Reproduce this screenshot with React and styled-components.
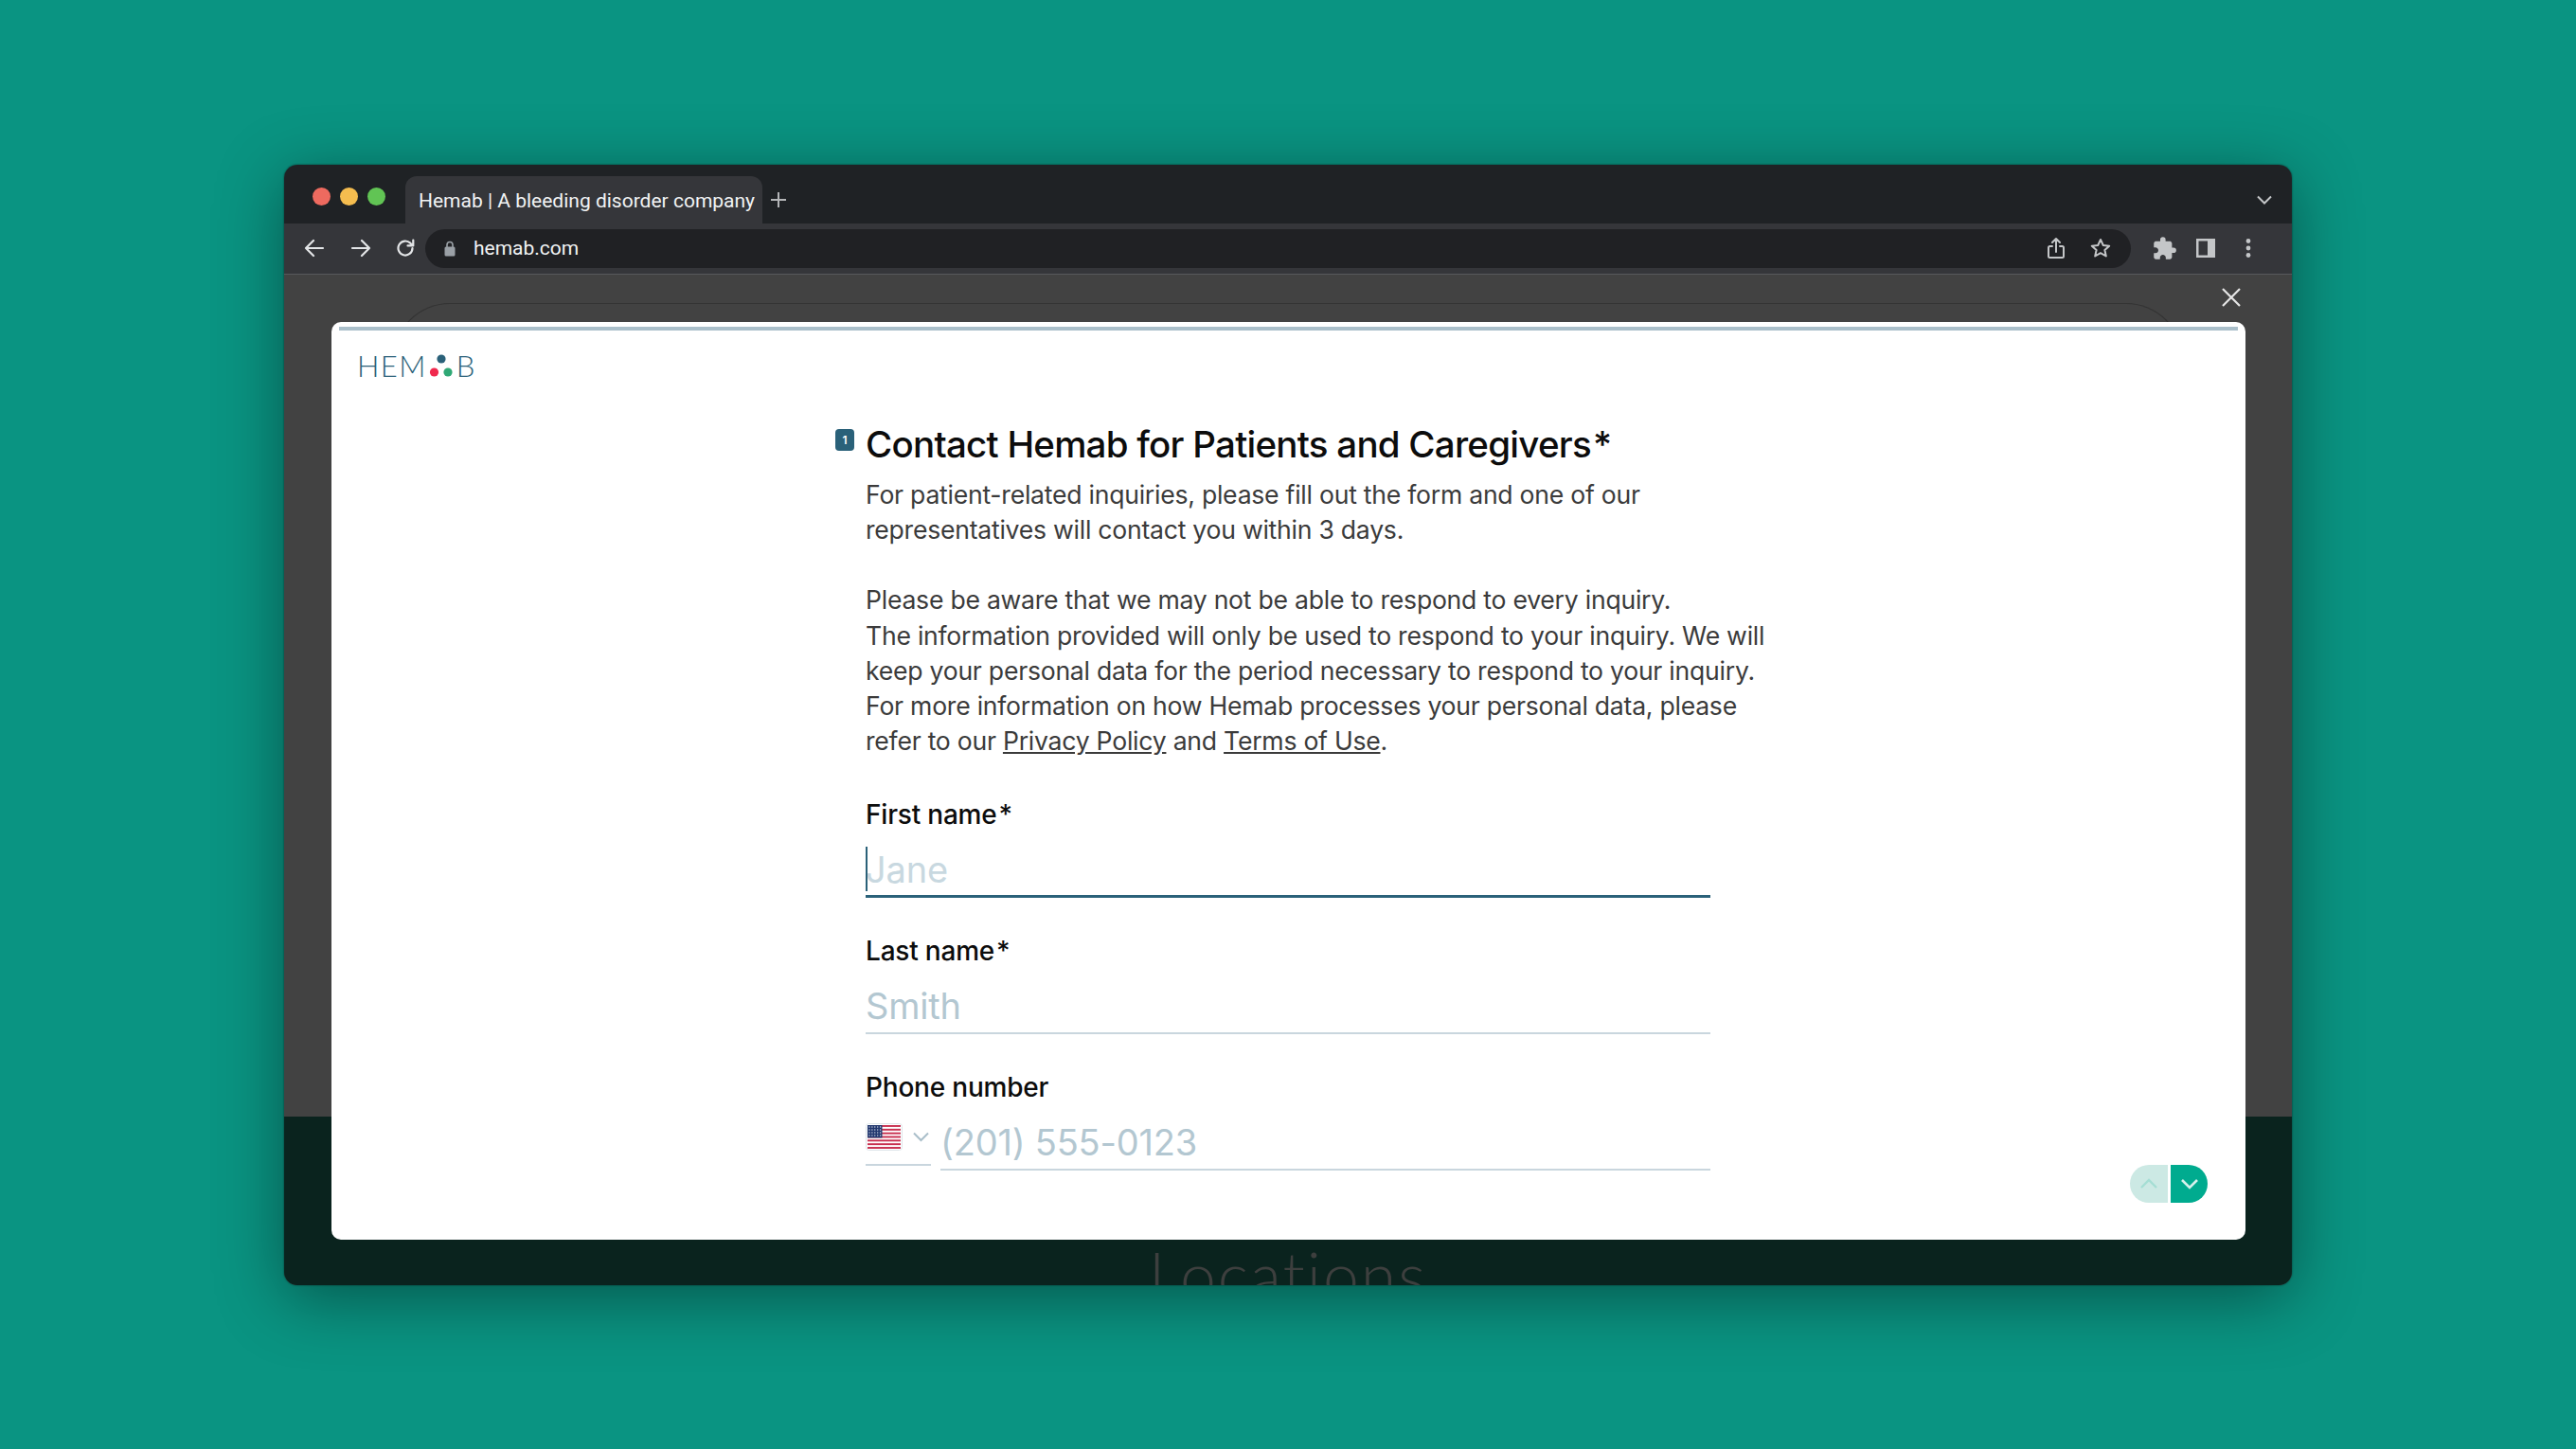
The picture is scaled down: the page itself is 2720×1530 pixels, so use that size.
import React from "react";
import styled, { createGlobalStyle } from "styled-components";
import { MdExtension } from "react-icons/md";

const GlobalStyle = createGlobalStyle`
  html, body {
    margin: 0;
    padding: 0;
    background: #0a9482;
  }
  * {
    box-sizing: border-box;
  }
`;

const Page = styled.div`
  width: 2720px;
  height: 1530px;
  padding: 174px 300px 173px;
  background: #0a9482;
  overflow: hidden;
`;

const Window = styled.div`
  width: 2120px;
  height: 1183px;
  display: flex;
  flex-direction: column;
  border-radius: 14px;
  overflow: hidden;
  box-shadow: 0 14px 70px rgba(0, 0, 0, 0.42), 0 0 2px rgba(0, 0, 0, 0.6);
`;

const TabStrip = styled.div`
  height: 62px;
  flex: none;
  display: flex;
  align-items: flex-end;
  padding-left: 30px;
  padding-right: 20px;
  background: #1f2225;
`;

const Lights = styled.div`
  display: flex;
  gap: 10px;
  align-self: flex-start;
  margin-top: 24px;
  margin-right: 21px;
`;

const Light = styled.span`
  width: 19px;
  height: 19px;
  border-radius: 50%;
  background: ${p => p.$color};
`;

const Tab = styled.div`
  width: 377px;
  height: 50px;
  display: flex;
  align-items: center;
  padding: 2px 0 0 14px;
  border-radius: 12px 12px 0 0;
  background: #35363a;
  color: #f1f3f4;
  font: 400 21px "Roboto", sans-serif;
  white-space: nowrap;
`;

const NewTab = styled.svg`
  width: 20px;
  height: 20px;
  margin: 0 0 15px 7px;
`;

const TabMenu = styled.svg`
  width: 18px;
  height: 12px;
  margin: 0 0 19px auto;
`;

const Toolbar = styled.div`
  height: 54px;
  flex: none;
  display: flex;
  align-items: center;
  padding: 0 20px 1px 20px;
  background: #35363a;
  border-bottom: 1px solid #58595c;
`;

const NavIcon = styled.svg`
  width: 24px;
  height: 24px;
  flex: none;
  margin-right: ${p => p.$gap || 23}px;
`;

const UrlBar = styled.div`
  width: 1801px;
  height: 41px;
  margin-left: -2px;
  display: flex;
  align-items: center;
  padding: 0 20px 0 20px;
  border-radius: 21px;
  background: #202124;
  color: #f1f3f4;
  font: 400 21px "Roboto", sans-serif;
`;

const UrlText = styled.span`
  margin-left: 19px;
  margin-right: auto;
`;

const BarIcon = styled.svg`
  width: 24px;
  height: 24px;
  flex: none;
  margin-left: ${p => p.$gap || 0}px;
`;

const Puzzle = styled(MdExtension)`
  width: 27px;
  height: 27px;
  flex: none;
  margin-left: 22px;
  color: #c4c6c8;
`;

const Viewport = styled.div`
  position: relative;
  flex: 1;
  display: flex;
  flex-direction: column;
  overflow: hidden;
  background: #424242;
`;

const Backdrop = styled.div`
  flex: 1;
  padding: 30px 115px 0;
`;

const BackdropCard = styled.div`
  height: 100%;
  border: 1px solid #333;
  border-bottom: 0;
  border-radius: 60px 60px 0 0;
`;

const DarkBand = styled.div`
  height: 178px;
  flex: none;
  display: flex;
  justify-content: center;
  padding-top: 133px;
  background: #0a231e;
  overflow: hidden;
`;

const BandTitle = styled.div`
  color: #3d3f3e;
  font: 300 68px/68px "Lato", sans-serif;
  letter-spacing: 2px;
`;

const CloseIcon = styled.svg`
  position: absolute;
  top: 13px;
  right: 53px;
  width: 22px;
  height: 22px;
`;

const Modal = styled.div`
  position: absolute;
  top: 50px;
  left: 50px;
  width: 2021px;
  height: 969px;
  padding: 5px 8px 0;
  overflow: hidden;
  border-radius: 10px;
  background: #fff;
`;

const Progress = styled.div`
  height: 4px;
  background: #aabfca;
`;

const LogoRow = styled.div`
  display: flex;
  align-items: center;
  height: 30px;
  margin: 22px 0 0 19px;
  color: #2a6179;
  font: 300 31px/30px "Lato", sans-serif;
  letter-spacing: 1.4px;
`;

const LogoDots = styled.svg`
  width: 30px;
  height: 30px;
  margin: 0 1px 0 0;
`;

const Form = styled.div`
  width: 892px;
  margin: 42px 0 0 556px;
`;

const Heading = styled.h1`
  position: relative;
  margin: 0;
  color: #0c0c0c;
  font: 500 38.5px/52px "Inter", sans-serif;
  letter-spacing: -0.75px;
  white-space: nowrap;
`;

const StepBadge = styled.span`
  position: absolute;
  top: 10px;
  left: -32px;
  width: 20px;
  height: 23px;
  display: flex;
  align-items: center;
  justify-content: center;
  border-radius: 4px;
  background: #2a6179;
  color: #fff;
  font: 600 12px "Inter", sans-serif;
  letter-spacing: 0;
`;

const Copy = styled.p`
  margin: ${p => p.$top || 0}px 0 0;
  color: #3b3b3b;
  font: 400 26.6px/37.2px "Inter", sans-serif;
  letter-spacing: -0.25px;
  white-space: nowrap;
`;

const TextLink = styled.a`
  color: inherit;
  text-decoration: underline;
`;

const Field = styled.div`
  margin-top: ${p => p.$top || 38}px;
`;

const Label = styled.div`
  color: #0c0c0c;
  font: 500 28px/36px "Inter", sans-serif;
  letter-spacing: -0.2px;
`;

const Required = styled.span`
  margin-left: 2px;
`;

const InputLine = styled.div`
  position: relative;
  height: 60px;
  margin-top: 10px;
  padding-top: 5px;
  border-bottom: ${p => (p.$focused ? "3px solid #2a6179" : "2px solid #c9d6de")};
  font: 400 38px/50px "Inter", sans-serif;
  letter-spacing: -0.2px;
  color: ${p => (p.$focused ? "#c8d8e0" : "#b3c7d1")};
`;

const Caret = styled.span`
  position: absolute;
  top: 6px;
  left: 0;
  width: 2px;
  height: 47px;
  background: #2a6179;
`;

const PhoneRow = styled.div`
  display: flex;
  gap: 10px;
  margin-top: 10px;
`;

const CountrySelect = styled.div`
  width: 69px;
  height: 55px;
  flex: none;
  display: flex;
  align-items: center;
  justify-content: space-between;
  padding-bottom: 5px;
  padding-right: 1px;
  border-bottom: 2px solid #c9d6de;
`;

const Flag = styled.svg`
  width: 39px;
  height: 29px;
`;

const SelectChevron = styled.svg`
  width: 19px;
  height: 12px;
`;

const PhoneInput = styled(InputLine)`
  flex: 1;
  margin-top: 0;
`;

const ScrollNav = styled.div`
  position: absolute;
  right: 40px;
  bottom: 39px;
  display: flex;
  gap: 3px;
`;

const ScrollButton = styled.div`
  width: ${p => (p.$dir === "up" ? 40 : 39)}px;
  height: 40px;
  display: flex;
  align-items: center;
  justify-content: center;
  border-radius: ${p => (p.$dir === "up" ? "20px 0 0 20px" : "0 20px 20px 0")};
  background: ${p => (p.$dir === "up" ? "#cce9e4" : "#00ab8f")};
`;

const ScrollChevron = styled.svg`
  width: 20px;
  height: 12px;
`;

const stroke = { fill: "none", stroke: "#e3e5e7", strokeWidth: 2.2, strokeLinecap: "round", strokeLinejoin: "round" };
const dim = { fill: "none", stroke: "#c4c6c8", strokeWidth: 2, strokeLinecap: "round", strokeLinejoin: "round" };

const stripes = [0, 2, 4, 6, 8, 10, 12];

function UsFlag() {
  return (
    <Flag viewBox="0 0 39 29">
      <rect x="0.5" y="0.5" width="38" height="28" rx="3" fill="#fff" stroke="#dfe6ea" />
      {stripes.map(i => (
        <rect key={i} x="2" y={2 + i * 1.92} width="35" height="1.92" fill="#c8304f" />
      ))}
      <rect x="2" y="2" width="15.5" height="13.4" fill="#22386f" />
      {[0, 1, 2, 3].map(r =>
        [0, 1, 2, 3, 4].map(c => (
          <circle key={`${r}-${c}`} cx={4 + c * 2.9} cy={4 + r * 3} r="0.7" fill="#cfd6e4" />
        ))
      )}
    </Flag>
  );
}

export default function App() {
  return (
    <Page>
      <GlobalStyle />
      <Window>
        <TabStrip>
          <Lights>
            <Light $color="#ee6a5f" />
            <Light $color="#f5bd4f" />
            <Light $color="#61c454" />
          </Lights>
          <Tab>Hemab | A bleeding disorder company</Tab>
          <NewTab viewBox="0 0 20 20">
            <path d="M10 2v16M2 10h16" fill="none" stroke="#b4b6b8" strokeWidth="2" />
          </NewTab>
          <TabMenu viewBox="0 0 18 12">
            <path d="M2 2.5l7 7 7-7" fill="none" stroke="#c4c6c8" strokeWidth="2" />
          </TabMenu>
        </TabStrip>
        <Toolbar>
          <NavIcon viewBox="0 0 24 24" $gap={25}>
            <path d="M21 12H3M11 4l-8 8 8 8" {...stroke} />
          </NavIcon>
          <NavIcon viewBox="0 0 24 24" $gap={23}>
            <path d="M3 12h18M13 4l8 8-8 8" {...stroke} />
          </NavIcon>
          <NavIcon viewBox="0 0 24 24" $gap={11}>
            <path d="M19.5 12a7.5 7.5 0 1 1-2.2-5.3L20 9.2M20.3 3.6v5.8h-5.8" {...stroke} />
          </NavIcon>
          <UrlBar>
            <svg width="12" height="17" viewBox="0 0 12 17">
              <path d="M3 7V4.5a3 3 0 0 1 6 0V7" fill="none" stroke="#9aa0a6" strokeWidth="1.6" />
              <rect x="0.5" y="6.5" width="11" height="10" rx="1.5" fill="#9aa0a6" />
            </svg>
            <UrlText>hemab.com</UrlText>
            <BarIcon viewBox="0 0 24 24">
              <path d="M8 10H5.5a1.5 1.5 0 0 0-1.5 1.5v9A1.5 1.5 0 0 0 5.5 22h13a1.5 1.5 0 0 0 1.5-1.5v-9a1.5 1.5 0 0 0-1.5-1.5H16M12 16V2M8 6l4-4 4 4" {...dim} />
            </BarIcon>
            <BarIcon viewBox="0 0 24 24" $gap={23}>
              <path d="M12 3l2.8 6 6.4.7-4.8 4.3 1.4 6.5L12 17.2l-5.8 3.3 1.4-6.5-4.8-4.3 6.4-.7z" {...dim} />
            </BarIcon>
          </UrlBar>
          <Puzzle />
          <BarIcon viewBox="0 0 24 24" $gap={18}>
            <path d="M2 2h20v20H2z M4.5 4.5v15H14v-15z" fill="#c4c6c8" fillRule="evenodd" />
          </BarIcon>
          <BarIcon viewBox="0 0 24 24" $gap={21}>
            <circle cx="12" cy="4.5" r="2.4" fill="#c4c6c8" />
            <circle cx="12" cy="12" r="2.4" fill="#c4c6c8" />
            <circle cx="12" cy="19.5" r="2.4" fill="#c4c6c8" />
          </BarIcon>
        </Toolbar>
        <Viewport>
          <Backdrop>
            <BackdropCard />
          </Backdrop>
          <DarkBand>
            <BandTitle>Locations</BandTitle>
          </DarkBand>
          <CloseIcon viewBox="0 0 22 22">
            <path d="M2 2l18 18M20 2L2 20" fill="none" stroke="#e6e6e6" strokeWidth="2.2" />
          </CloseIcon>
          <Modal>
            <Progress />
            <LogoRow>
              HEM
              <LogoDots viewBox="0 0 30 30">
                <circle cx="15" cy="8" r="4.6" fill="#2a6179" />
                <circle cx="7.5" cy="22" r="4.6" fill="#f0294e" />
                <circle cx="22" cy="22" r="4.6" fill="#2fa875" />
              </LogoDots>
              B
            </LogoRow>
            <Form>
              <Heading>
                <StepBadge>1</StepBadge>
                Contact Hemab for Patients and Caregivers<Required>*</Required>
              </Heading>
              <Copy $top={9}>
                For patient-related inquiries, please fill out the form and one of our
                <br />
                representatives will contact you within 3 days.
              </Copy>
              <Copy $top={37}>
                Please be aware that we may not be able to respond to every inquiry.
                <br />
                The information provided will only be used to respond to your inquiry. We will
                <br />
                keep your personal data for the period necessary to respond to your inquiry.
                <br />
                For more information on how Hemab processes your personal data, please
                <br />
                refer to our <TextLink>Privacy Policy</TextLink> and <TextLink>Terms of Use</TextLink>.
              </Copy>
              <Field $top={41}>
                <Label>
                  First name<Required>*</Required>
                </Label>
                <InputLine $focused>
                  <Caret />
                  Jane
                </InputLine>
              </Field>
              <Field>
                <Label>
                  Last name<Required>*</Required>
                </Label>
                <InputLine>Smith</InputLine>
              </Field>
              <Field>
                <Label>Phone number</Label>
                <PhoneRow>
                  <CountrySelect>
                    <UsFlag />
                    <SelectChevron viewBox="0 0 19 12">
                      <path d="M2 2.5l7.5 7.5L17 2.5" fill="none" stroke="#a9bec9" strokeWidth="2" />
                    </SelectChevron>
                  </CountrySelect>
                  <PhoneInput>(201) 555-0123</PhoneInput>
                </PhoneRow>
              </Field>
            </Form>
            <ScrollNav>
              <ScrollButton $dir="up">
                <ScrollChevron viewBox="0 0 20 12">
                  <path d="M2 10l8-8 8 8" fill="none" stroke="#a5ded4" strokeWidth="2.4" />
                </ScrollChevron>
              </ScrollButton>
              <ScrollButton $dir="down">
                <ScrollChevron viewBox="0 0 20 12">
                  <path d="M2 2l8 8 8-8" fill="none" stroke="#d5f0eb" strokeWidth="2.6" />
                </ScrollChevron>
              </ScrollButton>
            </ScrollNav>
          </Modal>
        </Viewport>
      </Window>
    </Page>
  );
}
